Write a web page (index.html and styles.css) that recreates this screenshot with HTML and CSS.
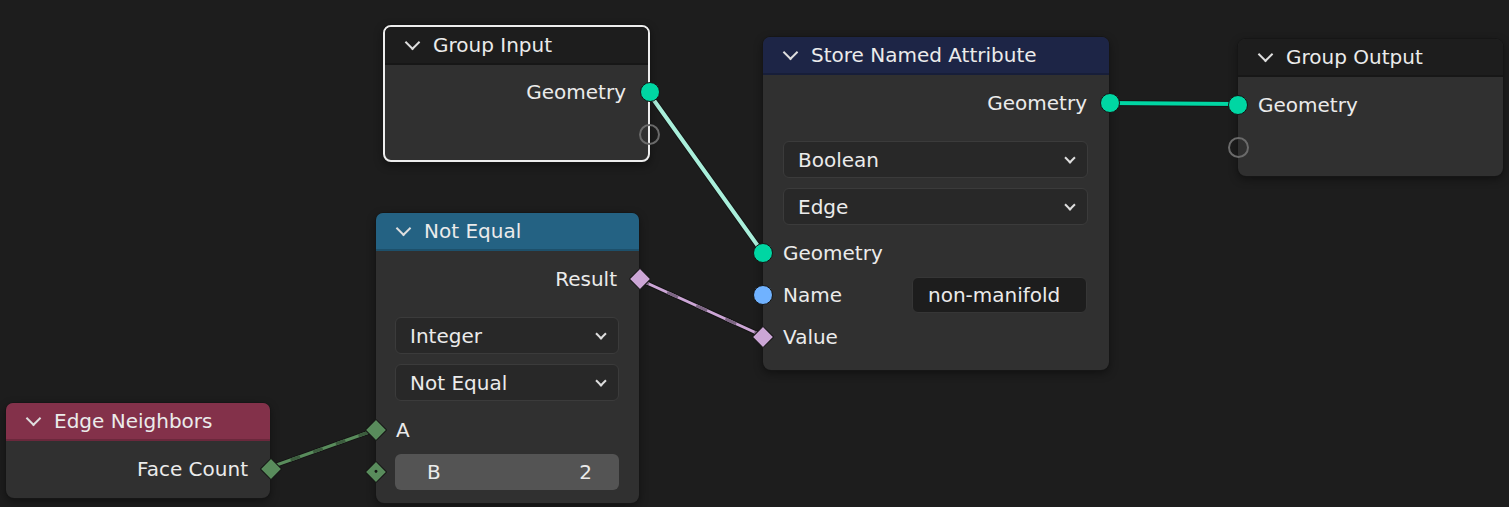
FILE: index.html
```html
<!DOCTYPE html>
<html lang="en">
  <head>
    <meta charset="UTF-8" />
    <title>Geometry Nodes</title>
    <link rel="stylesheet" href="styles.css">
  </head>
  <body>
    <div class="editor">
      <svg class="links" width="1509" height="507" viewBox="0 0 1509 507">
        <line class="link-edge" x1="648" y1="92" x2="763" y2="253" />
        <line class="link-geo-sel" x1="648" y1="92" x2="763" y2="253" />
        <line class="link-edge" x1="1107" y1="103" x2="1238" y2="104" />
        <line class="link-geo" x1="1107" y1="103" x2="1238" y2="104" />
        <line class="link-edge-thin" x1="638" y1="279" x2="763" y2="336" />
        <line class="link-bool" x1="638" y1="279" x2="763" y2="336" />
        <line class="link-bool-dash" x1="638" y1="279" x2="763" y2="336" />
        <line class="link-edge-thin" x1="268" y1="468" x2="375" y2="430" />
        <line class="link-int" x1="268" y1="468" x2="375" y2="430" />
        <line class="link-int-dash" x1="268" y1="468" x2="375" y2="430" />
      </svg>

      <!-- Group Input -->
      <div class="node selected node-group-input">
        <div class="node-header header-group">
          <span class="chevron"></span>Group Input
        </div>
        <div class="node-body">
          <div class="row out">Geometry<span class="socket out geo"></span></div>
          <div class="row out"><span class="socket out empty"></span></div>
        </div>
      </div>

      <!-- Not Equal -->
      <div class="node node-compare">
        <div class="node-header header-converter">
          <span class="chevron"></span>Not Equal
        </div>
        <div class="node-body">
          <div class="row out">Result<span class="socket out diamond bool"></span></div>
          <div class="controls">
            <div class="dropdown">Integer<span class="caret"></span></div>
            <div class="dropdown">Not Equal<span class="caret"></span></div>
          </div>
          <div class="row in"><span class="socket in diamond int"></span>A</div>
          <div class="row in">
            <span class="socket in diamond int dot"></span>
            <div class="number-field"><span>B</span><span>2</span></div>
          </div>
        </div>
      </div>

      <!-- Edge Neighbors -->
      <div class="node node-edge-neighbors">
        <div class="node-header header-input">
          <span class="chevron"></span>Edge Neighbors
        </div>
        <div class="node-body">
          <div class="row out">Face Count<span class="socket out diamond int"></span></div>
        </div>
      </div>

      <!-- Store Named Attribute -->
      <div class="node node-store">
        <div class="node-header header-geometry">
          <span class="chevron"></span>Store Named Attribute
        </div>
        <div class="node-body">
          <div class="row out">Geometry<span class="socket out geo"></span></div>
          <div class="controls">
            <div class="dropdown">Boolean<span class="caret"></span></div>
            <div class="dropdown">Edge<span class="caret"></span></div>
          </div>
          <div class="row in"><span class="socket in geo"></span>Geometry</div>
          <div class="row in">
            <span class="socket in string"></span>Name
            <div class="text-field">non-manifold</div>
          </div>
          <div class="row in"><span class="socket in diamond bool"></span>Value</div>
        </div>
      </div>

      <!-- Group Output -->
      <div class="node node-group-output">
        <div class="node-header header-group">
          <span class="chevron"></span>Group Output
        </div>
        <div class="node-body">
          <div class="row in"><span class="socket in geo"></span>Geometry</div>
          <div class="row in"><span class="socket in empty"></span></div>
        </div>
      </div>
    </div>
  </body>
</html>
```

FILE: styles.css
```css
* {
  margin: 0;
  padding: 0;
  box-sizing: border-box;
}

body {
  background: #1d1d1d;
  font-family: "DejaVu Sans", "Liberation Sans", sans-serif;
  font-size: 20px;
  color: #ebebeb;
}

.editor {
  position: relative;
  width: 1509px;
  height: 507px;
  overflow: hidden;
  background: #1d1d1d;
}

/* links */
.links {
  position: absolute;
  left: 0;
  top: 0;
}

.links line {
  stroke-linecap: round;
}

.link-edge {
  stroke: #141414;
  stroke-width: 6;
}

.link-edge-thin {
  stroke: #141414;
  stroke-width: 5;
}

.link-geo-sel {
  stroke: #a9efdb;
  stroke-width: 4;
}

.link-geo {
  stroke: #00d6a3;
  stroke-width: 4;
}

.link-bool {
  stroke: #cca6d6;
  stroke-width: 3;
}

.link-bool-dash {
  stroke: #7d6684;
  stroke-width: 3;
  stroke-dasharray: 12 20;
  stroke-linecap: butt !important;
}

.link-int {
  stroke: #598c5c;
  stroke-width: 3;
}

.link-int-dash {
  stroke: #3c5c3e;
  stroke-width: 3;
  stroke-dasharray: 10 14;
  stroke-linecap: butt !important;
}

/* nodes */
.node {
  position: absolute;
  background: #303030;
  border-radius: 8px;
  box-shadow: 0 0 0 1px #161616, 0 3px 10px rgba(0, 0, 0, 0.45);
}

.node.selected {
  border: 2px solid #ededed;
}

.node-group-input {
  left: 383px;
  top: 25px;
  width: 267px;
}

.node-compare {
  left: 376px;
  top: 213px;
  width: 263px;
}

.node-edge-neighbors {
  left: 6px;
  top: 403px;
  width: 264px;
}

.node-store {
  left: 763px;
  top: 37px;
  width: 346px;
}

.node-group-output {
  left: 1238px;
  top: 39px;
  width: 265px;
}

.node-header {
  height: 38px;
  display: flex;
  align-items: center;
  padding-left: 22px;
  border-radius: 7px 7px 0 0;
  border-bottom: 2px solid rgba(0, 0, 0, 0.18);
  color: #ebebeb;
  white-space: nowrap;
}

.node.selected .node-header {
  border-radius: 6px 6px 0 0;
}

.header-group {
  background: #1d1d1d;
}

.header-converter {
  background: #246283;
}

.header-input {
  background: #83314a;
}

.header-geometry {
  background: #1d2546;
}

.chevron {
  width: 11px;
  height: 11px;
  margin-right: 15px;
  margin-top: -6px;
  border-right: 2px solid #dedede;
  border-bottom: 2px solid #dedede;
  transform: rotate(45deg);
}

.node-body {
  padding: 7px 0 8px;
}

.node.selected .node-body {
  padding: 6px 0 5px;
}

.node-compare .node-body {
  padding-bottom: 10px;
}

.node-store .node-body {
  padding-bottom: 12px;
}

.row {
  position: relative;
  height: 42px;
  display: flex;
  align-items: center;
  padding: 0 22px 0 20px;
  white-space: nowrap;
}

.row.out {
  justify-content: flex-end;
}

.controls {
  display: flex;
  flex-direction: column;
  gap: 10px;
  padding: 17px 21px 7px 20px;
}

.node-compare .controls {
  padding: 17px 20px 8px 19px;
}

.dropdown {
  height: 37px;
  display: flex;
  align-items: center;
  justify-content: space-between;
  padding: 0 13px 0 14px;
  background: #282828;
  border: 1px solid #3b3b3b;
  border-radius: 6px;
}

.caret {
  width: 8px;
  height: 8px;
  margin-top: -4px;
  border-right: 2px solid #dedede;
  border-bottom: 2px solid #dedede;
  transform: rotate(45deg);
}

.text-field {
  margin-left: auto;
  width: 175px;
  height: 36px;
  display: flex;
  align-items: center;
  padding-left: 15px;
  background: #1d1d1d;
  border: 1px solid #363636;
  border-radius: 6px;
}

.node-store .row.in:nth-of-type(2) {
  padding-right: 21px;
}

.number-field {
  flex: 1;
  height: 36px;
  display: flex;
  align-items: center;
  justify-content: space-between;
  padding: 0 27px 0 32px;
  background: #545454;
  border-radius: 6px;
  margin-left: -1px;
}

.node-compare .row.in {
  padding-right: 20px;
}

/* sockets */
.socket {
  position: absolute;
  top: 50%;
  width: 20px;
  height: 20px;
  margin-top: -10px;
  border-radius: 50%;
  border: 1.5px solid #141414;
}

.socket.out {
  right: -11px;
}

.socket.in {
  left: -10px;
}

.node.selected .socket.out {
  right: -12px;
}

.socket.geo {
  background: #00d6a3;
}

.socket.string {
  background: #70b2ff;
}

.socket.empty {
  width: 21px;
  height: 21px;
  margin-top: -10.5px;
  background: transparent;
  border: 2.5px solid #6a6a6a;
}

.socket.diamond {
  width: 16px;
  height: 16px;
  margin-top: -8px;
  border-radius: 1px;
  transform: rotate(45deg);
}

.socket.diamond.out {
  right: -9px;
}

.socket.diamond.in {
  left: -8px;
}

.socket.bool {
  background: #cca6d6;
}

.socket.int {
  background: #598c5c;
}

.socket.dot::after {
  content: "";
  position: absolute;
  left: 5px;
  top: 5px;
  width: 3px;
  height: 3px;
  border-radius: 50%;
  background: #141414;
}
```
